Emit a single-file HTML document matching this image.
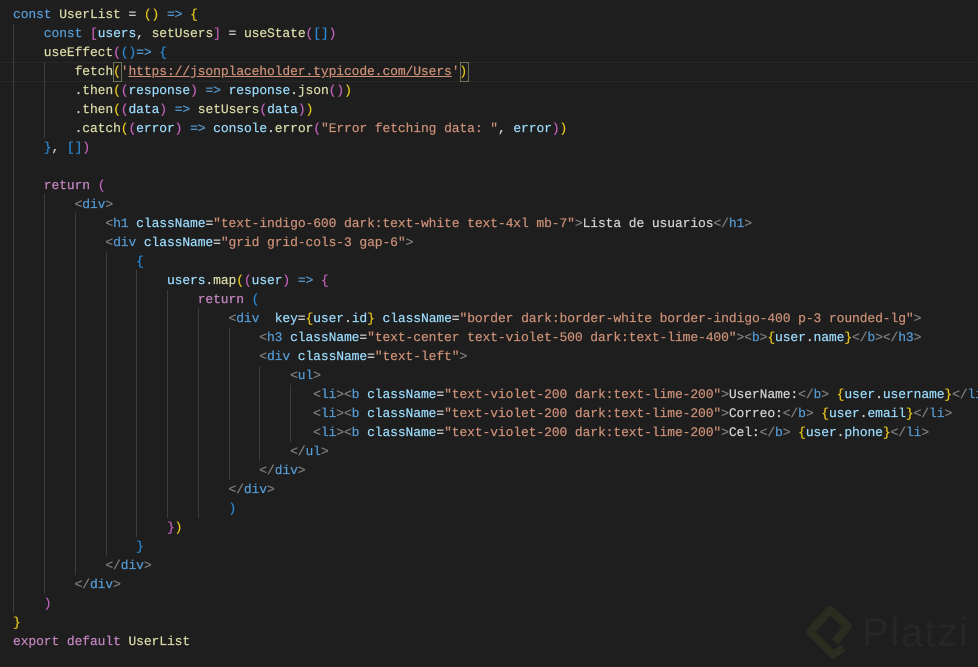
<!DOCTYPE html>
<html><head><meta charset="utf-8"><style>
html,body{margin:0;padding:0;background:#1e1e1e;width:978px;height:667px;overflow:hidden}
#w{position:relative;width:978px;height:667px;overflow:hidden;background:#1e1e1e}
.l{position:absolute;left:13px;height:19px;line-height:19px;white-space:pre;font-family:"Liberation Mono",monospace;font-size:13px;letter-spacing:-.105px;color:#d4d4d4;text-rendering:geometricPrecision;-webkit-text-stroke:.2px;filter:blur(.3px)}
.g{position:absolute;width:1px;background:#3c3c3c}
.k{color:#569cd6}.v{color:#9cdcfe}.f{color:#dcdcaa}.s{color:#ce9178}.t{color:#808080}.n{color:#569cd6}.c{color:#c586c0}
.y{color:#e8c71a}.p{color:#c462bd}.b{color:#2a8bd8}.u{text-decoration:underline;text-decoration-color:#ce9178}
</style></head><body><div id="w">
<div style="position:absolute;left:0;top:62px;width:978px;height:18px;border-top:1px solid #282828;border-bottom:1px solid #282828"></div>
<div style="position:absolute;left:113px;top:62px;width:7px;height:18px;border:1px solid #6f7355"></div>
<div style="position:absolute;left:460px;top:62px;width:7px;height:18px;border:1px solid #6f7355"></div>
<div class="g" style="left:13px;top:24px;height:589px"></div>
<div class="g" style="left:44px;top:62px;height:76px"></div>
<div class="g" style="left:44px;top:194px;height:400px"></div>
<div class="g" style="left:75px;top:213px;height:362px"></div>
<div class="g" style="left:106px;top:252px;height:304px"></div>
<div class="g" style="left:136px;top:270px;height:267px"></div>
<div class="g" style="left:167px;top:290px;height:228px"></div>
<div class="g" style="left:198px;top:308px;height:210px"></div>
<div class="g" style="left:229px;top:328px;height:152px"></div>
<div class="g" style="left:259px;top:366px;height:95px"></div>
<div class="g" style="left:290px;top:385px;height:57px"></div>
<div class="l" style="top:5px"><span class="k">const</span> <span class="f">UserList</span> = <span class="y">()</span> <span class="k">=&gt;</span> <span class="y">{</span></div>
<div class="l" style="top:24px">    <span class="k">const</span> <span class="p">[</span><span class="v">users</span>, <span class="f">setUsers</span><span class="p">]</span> = <span class="f">useState</span><span class="p">(</span><span class="b">[]</span><span class="p">)</span></div>
<div class="l" style="top:43px">    <span class="f">useEffect</span><span class="p">(</span><span class="b">()</span><span class="k">=&gt;</span> <span class="b">{</span></div>
<div class="l" style="top:62px">        <span class="f">fetch</span><span class="y">(</span><span class="s">'<span class="u">https://jsonplaceholder.typicode.com/Users</span>'</span><span class="y">)</span></div>
<div class="l" style="top:81px">        .<span class="f">then</span><span class="y">(</span><span class="p">(</span><span class="v">response</span><span class="p">)</span> <span class="k">=&gt;</span> <span class="v">response</span>.<span class="f">json</span><span class="p">()</span><span class="y">)</span></div>
<div class="l" style="top:100px">        .<span class="f">then</span><span class="y">(</span><span class="p">(</span><span class="v">data</span><span class="p">)</span> <span class="k">=&gt;</span> <span class="f">setUsers</span><span class="p">(</span><span class="v">data</span><span class="p">)</span><span class="y">)</span></div>
<div class="l" style="top:119px">        .<span class="f">catch</span><span class="y">(</span><span class="p">(</span><span class="v">error</span><span class="p">)</span> <span class="k">=&gt;</span> <span class="v">console</span>.<span class="f">error</span><span class="p">(</span><span class="s">"Error fetching data: "</span>, <span class="v">error</span><span class="p">)</span><span class="y">)</span></div>
<div class="l" style="top:138px">    <span class="b">}</span>, <span class="b">[]</span><span class="p">)</span></div>
<div class="l" style="top:176px">    <span class="c">return</span> <span class="p">(</span></div>
<div class="l" style="top:195px">        <span class="t">&lt;</span><span class="n">div</span><span class="t">&gt;</span></div>
<div class="l" style="top:214px">            <span class="t">&lt;</span><span class="n">h1</span> <span class="v">className</span>=<span class="s">"text-indigo-600 dark:text-white text-4xl mb-7"</span><span class="t">&gt;</span>Lista de usuarios<span class="t">&lt;/</span><span class="n">h1</span><span class="t">&gt;</span></div>
<div class="l" style="top:233px">            <span class="t">&lt;</span><span class="n">div</span> <span class="v">className</span>=<span class="s">"grid grid-cols-3 gap-6"</span><span class="t">&gt;</span></div>
<div class="l" style="top:252px">                <span class="b">{</span></div>
<div class="l" style="top:271px">                    <span class="v">users</span>.<span class="f">map</span><span class="y">(</span><span class="p">(</span><span class="v">user</span><span class="p">)</span> <span class="k">=&gt;</span> <span class="p">{</span></div>
<div class="l" style="top:290px">                        <span class="c">return</span> <span class="b">(</span></div>
<div class="l" style="top:309px">                            <span class="t">&lt;</span><span class="n">div</span>  <span class="v">key</span>=<span class="y">{</span><span class="v">user</span>.<span class="v">id</span><span class="y">}</span> <span class="v">className</span>=<span class="s">"border dark:border-white border-indigo-400 p-3 rounded-lg"</span><span class="t">&gt;</span></div>
<div class="l" style="top:328px">                                <span class="t">&lt;</span><span class="n">h3</span> <span class="v">className</span>=<span class="s">"text-center text-violet-500 dark:text-lime-400"</span><span class="t">&gt;&lt;</span><span class="n">b</span><span class="t">&gt;</span><span class="y">{</span><span class="v">user</span>.<span class="v">name</span><span class="y">}</span><span class="t">&lt;/</span><span class="n">b</span><span class="t">&gt;&lt;/</span><span class="n">h3</span><span class="t">&gt;</span></div>
<div class="l" style="top:347px">                                <span class="t">&lt;</span><span class="n">div</span> <span class="v">className</span>=<span class="s">"text-left"</span><span class="t">&gt;</span></div>
<div class="l" style="top:366px">                                    <span class="t">&lt;</span><span class="n">ul</span><span class="t">&gt;</span></div>
<div class="l" style="top:385px">                                       <span class="t">&lt;</span><span class="n">li</span><span class="t">&gt;&lt;</span><span class="n">b</span> <span class="v">className</span>=<span class="s">"text-violet-200 dark:text-lime-200"</span><span class="t">&gt;</span>UserName:<span class="t">&lt;/</span><span class="n">b</span><span class="t">&gt;</span> <span class="y">{</span><span class="v">user</span>.<span class="v">username</span><span class="y">}</span><span class="t">&lt;/</span><span class="n">li</span><span class="t">&gt;</span></div>
<div class="l" style="top:404px">                                       <span class="t">&lt;</span><span class="n">li</span><span class="t">&gt;&lt;</span><span class="n">b</span> <span class="v">className</span>=<span class="s">"text-violet-200 dark:text-lime-200"</span><span class="t">&gt;</span>Correo:<span class="t">&lt;/</span><span class="n">b</span><span class="t">&gt;</span> <span class="y">{</span><span class="v">user</span>.<span class="v">email</span><span class="y">}</span><span class="t">&lt;/</span><span class="n">li</span><span class="t">&gt;</span></div>
<div class="l" style="top:423px">                                       <span class="t">&lt;</span><span class="n">li</span><span class="t">&gt;&lt;</span><span class="n">b</span> <span class="v">className</span>=<span class="s">"text-violet-200 dark:text-lime-200"</span><span class="t">&gt;</span>Cel:<span class="t">&lt;/</span><span class="n">b</span><span class="t">&gt;</span> <span class="y">{</span><span class="v">user</span>.<span class="v">phone</span><span class="y">}</span><span class="t">&lt;/</span><span class="n">li</span><span class="t">&gt;</span></div>
<div class="l" style="top:442px">                                    <span class="t">&lt;/</span><span class="n">ul</span><span class="t">&gt;</span></div>
<div class="l" style="top:461px">                                <span class="t">&lt;/</span><span class="n">div</span><span class="t">&gt;</span></div>
<div class="l" style="top:480px">                            <span class="t">&lt;/</span><span class="n">div</span><span class="t">&gt;</span></div>
<div class="l" style="top:499px">                            <span class="b">)</span></div>
<div class="l" style="top:518px">                    <span class="p">}</span><span class="y">)</span></div>
<div class="l" style="top:537px">                <span class="b">}</span></div>
<div class="l" style="top:556px">            <span class="t">&lt;/</span><span class="n">div</span><span class="t">&gt;</span></div>
<div class="l" style="top:575px">        <span class="t">&lt;/</span><span class="n">div</span><span class="t">&gt;</span></div>
<div class="l" style="top:594px">    <span class="p">)</span></div>
<div class="l" style="top:613px"><span class="y">}</span></div>
<div class="l" style="top:632px"><span class="c">export</span> <span class="c">default</span> <span class="f">UserList</span></div>
<svg style="position:absolute;left:0;top:0" width="978" height="667" viewBox="0 0 978 667"><path d="M843 648L833 655L810 632L830 610L848 626L835 642" fill="none" stroke="#2a2c20" stroke-width="8" stroke-linejoin="round"/></svg>
<div style="position:absolute;left:862px;top:610px;font:40px/46px 'Liberation Sans',sans-serif;color:#262626;letter-spacing:1.6px">Platzi</div>
</div></body></html>
